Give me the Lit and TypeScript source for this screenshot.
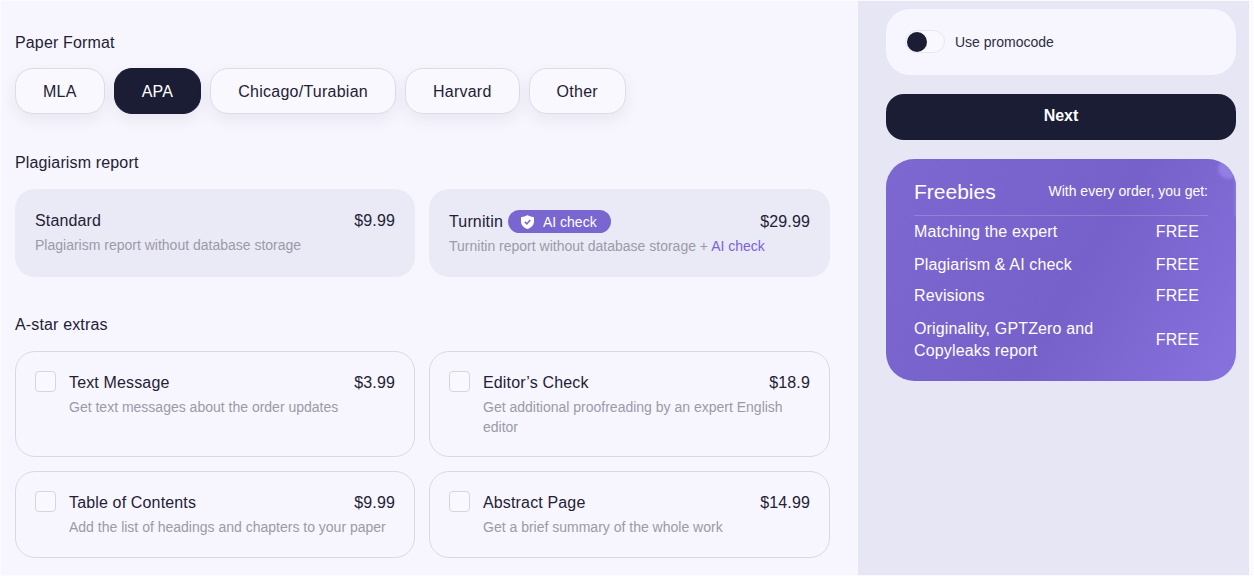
import { LitElement, html, css } from "lit";
import { customElement } from "lit/decorators.js";

const formats = ["MLA", "APA", "Chicago/Turabian", "Harvard", "Other"];
const extras = [
  { t: "Text Message", p: "$3.99", d: "Get text messages about the order updates" },
  { t: "Editor’s Check", p: "$18.9", d: "Get additional proofreading by an expert English editor" },
  { t: "Table of Contents", p: "$9.99", d: "Add the list of headings and chapters to your paper" },
  { t: "Abstract Page", p: "$14.99", d: "Get a brief summary of the whole work" },
];
const freebies = ["Matching the expert", "Plagiarism & AI check", "Revisions"];

@customElement("app-root")
export class AppRoot extends LitElement {
  static styles = css`
    :host { display: block; width: 1254px; height: 576px; overflow: hidden; background: #fbfbfe; padding: 1px 5px 1px 1px; box-sizing: border-box; font-family: "Liberation Sans", Arial, sans-serif; color: #1f2136; }
    * { box-sizing: border-box; }
    .page { display: grid; grid-template-columns: 857px 391px; height: 574px; }
    .main { background: #f7f6fe; padding: 33px 28px 0 14px; }
    .side { background: #e6e6f4; padding: 8px 13px 0 28px; display: flex; flex-direction: column; }
    .label { font-size: 16px; line-height: 18px; letter-spacing: 0.15px; }
    .formats { display: flex; gap: 9px; margin-top: 16px; }
    .fmt { height: 46px; padding: 1px 27px 0; border-radius: 18px; border: 1px solid #dcdbe8; background: #f9f8ff; font-size: 16px; letter-spacing: 0.25px; display: flex; align-items: center; box-shadow: 0 6px 16px rgba(40, 40, 90, 0.07); }
    .fmt.on { background: #1a1d33; border-color: #1a1d33; color: #fff; }
    .sec2 { margin-top: 40px; }
    .sec3 { margin-top: 39px; }
    .grid { display: grid; grid-template-columns: 400px 401px; column-gap: 14px; }
    .report { margin-top: 17px; }
    .rcard { height: 88px; background: #eaeaf6; border-radius: 20px; padding: 21px 20px 0; }
    .top { display: flex; justify-content: space-between; align-items: center; font-size: 16px; line-height: 22px; letter-spacing: 0.15px; }
    .name { display: flex; align-items: center; gap: 5px; }
    .badge { display: inline-flex; align-items: center; gap: 9px; height: 23px; padding: 0 14px 0 13px; border-radius: 12px; background: #7a66d0; color: #fff; font-size: 14px; letter-spacing: 0; }
    .desc { font-size: 14px; line-height: 20px; color: #9a9aa8; margin-top: 3px; }
    .desc b { font-weight: 400; color: #7a62d6; }
    .extras { margin-top: 17px; row-gap: 14px; }
    .ecard { border: 1px solid #d9d8e6; border-radius: 20px; padding: 20px 19px 0; display: flex; gap: 13px; height: 87px; }
    .ecard.tall { height: 106px; }
    .check { flex: none; width: 21px; height: 21px; margin-top: -1px; border: 1px solid #d5d4e2; border-radius: 4px; background: #f9f8ff; }
    .body { flex: 1; min-width: 0; }
    .promo { height: 65.5px; border-radius: 24px; background: #f7f6fe; padding: 0 19px; display: flex; align-items: center; gap: 10px; font-size: 14px; color: #2c2e42; }
    .toggle { width: 40px; height: 23px; padding-left: 1px; border-radius: 12px; border: 1px solid #e6e6f4; background: #f9f8ff; display: flex; align-items: center; }
    .knob { width: 20px; height: 20px; border-radius: 50%; background: #1a1d33; }
    .next { margin-top: 19px; height: 46.500px; padding-bottom: 2px; border-radius: 18px; background: #1a1d33; color: #fff; display: flex; align-items: center; justify-content: center; font-size: 16px; font-weight: 700; }
    .free { position: relative; overflow: hidden; margin-top: 18.700px; height: 222.300px; border-radius: 28px; background: linear-gradient(120deg, #7d68d2 0%, #7661ca 55%, #8872de 100%); color: #fff; padding: 16px 28px 0; }
    .corner { position: absolute; top: 0; right: -4px; width: 22px; height: 20px; border-radius: 50%; background: #917fe3; filter: blur(1.500px); }
    .edge { position: absolute; top: 20px; right: -1px; width: 3px; height: 38px; background: #8b78de; filter: blur(1px); }
    .fhead { position: relative; display: flex; justify-content: space-between; align-items: flex-start; height: 41px; padding-top: 4px; border-bottom: 1px solid rgba(255, 255, 255, 0.18); }
    .ftitle { font-size: 21px; line-height: 26px; }
    .fsub { font-size: 14px; line-height: 24px; }
    .row { position: relative; display: flex; justify-content: space-between; align-items: center; font-size: 16px; letter-spacing: 0.15px; padding-right: 9px; height: 32px; }
    .row.r0 { height: 33px; }
    .row.r2 { height: 30px; }
    .row.two { height: 46px; margin-top: 6px; line-height: 22px; }
  `;

  render() {
    return html`<div class="page">
      <div class="main">
        <div class="label">Paper Format</div>
        <div class="formats">
          ${formats.map((f) => html`<div class="fmt ${f === "APA" ? "on" : ""}">${f}</div>`)}
        </div>
        <div class="label sec2">Plagiarism report</div>
        <div class="grid report">
          <div class="rcard">
            <div class="top"><span>Standard</span><span>$9.99</span></div>
            <div class="desc">Plagiarism report without database storage</div>
          </div>
          <div class="rcard">
            <div class="top">
              <span class="name">Turnitin
                <span class="badge">
                  <svg width="13" height="14" viewBox="0 0 13 14"><path fill="#fff" d="M6.500 0C8 1.100 10 1.800 12.200 2c.5 0 .8.400.8.900v3.600c0 3.200-2.300 6-6.500 7.500C2.300 12.500 0 9.700 0 6.500V2.900C0 2.400.3 2 .8 2 3 1.800 5 1.100 6.500 0z"/><path fill="none" stroke="#7a66d0" stroke-width="1.500" d="M3.800 6.900 5.800 8.900 9.300 5.100"/></svg>
                  AI check
                </span>
              </span>
              <span>$29.99</span>
            </div>
            <div class="desc">Turnitin report without database storage + <b>AI check</b></div>
          </div>
        </div>
        <div class="label sec3">A-star extras</div>
        <div class="grid extras">
          ${extras.map((e, i) => html`<div class="ecard ${i < 2 ? "tall" : ""}">
            <div class="check"></div>
            <div class="body">
              <div class="top"><span>${e.t}</span><span>${e.p}</span></div>
              <div class="desc">${e.d}</div>
            </div>
          </div>`)}
        </div>
      </div>
      <div class="side">
        <div class="promo"><div class="toggle"><div class="knob"></div></div>Use promocode</div>
        <div class="next">Next</div>
        <div class="free">
          <div class="corner"></div>
          <div class="edge"></div>
          <div class="fhead"><span class="ftitle">Freebies</span><span class="fsub">With every order, you get:</span></div>
          ${freebies.map((f, i) => html`<div class="row r${i}"><span>${f}</span><span>FREE</span></div>`)}
          <div class="row two"><span>Originality, GPTZero and<br />Copyleaks report</span><span>FREE</span></div>
        </div>
      </div>
    </div>`;
  }
}
